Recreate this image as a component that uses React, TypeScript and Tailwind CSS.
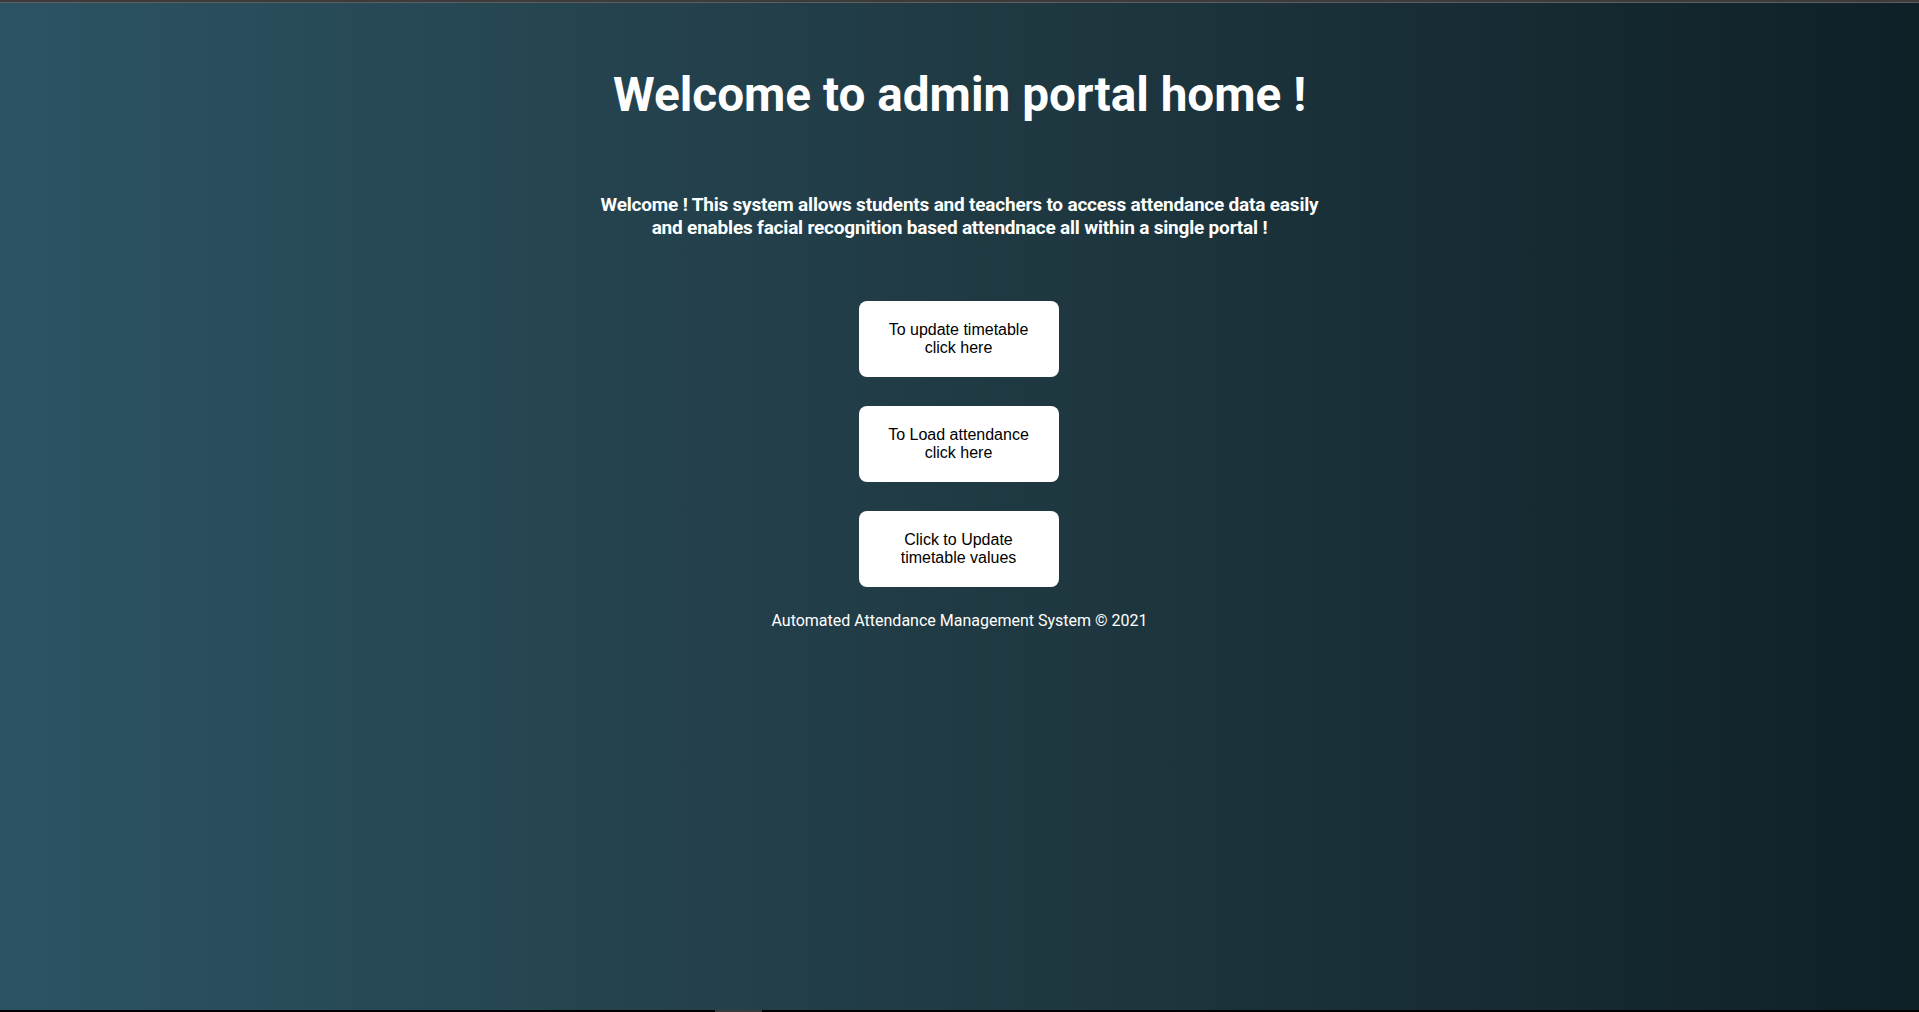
import React from 'react';

const links = [
  ['To update timetable', 'click here'],
  ['To Load attendance', 'click here'],
  ['Click to Update', 'timetable values'],
];

const App: React.FC = () => (
  <div className="w-full h-[1012px] flex flex-col overflow-hidden bg-black">
    <div className="h-[2px] bg-[#3c3c3c]" />
    <div className="h-[1px] bg-[#5e5e5e]" />
    <div
      className="flex-1 flex flex-col items-center bg-[linear-gradient(to_left,#0f2027,#203a43,#2c5364)] text-white"
      style={{ fontFamily: 'Roboto, "Noto Sans", sans-serif' }}
    >
      <h1 className="mt-[64px] text-[47.7px] leading-[1.2] font-bold">Welcome to admin portal home !</h1>
      <p className="mt-[69px] text-[19px] leading-[23px] font-bold text-center tracking-[-0.2px]">
        Welcome ! This system allows students and teachers to access attendance data easily
        <br />
        and enables facial recognition based attendnace all within a single portal !
      </p>
      <div className="mt-[62px] mr-[2px] flex flex-col gap-[29px]">
        {links.map(([a, b]) => (
          <button
            key={a}
            className="w-[200px] h-[76px] bg-white rounded-[8px] text-black text-[16px] leading-[18px] text-center"
            style={{ fontFamily: '"Liberation Sans", Arial, sans-serif' }}
          >
            {a}
            <br />
            {b}
          </button>
        ))}
      </div>
      <p className="mt-[24px] text-[16px] leading-[19px]">Automated Attendance Management System © 2021</p>
    </div>
    <div className="h-[2px] bg-black relative">
      <div className="absolute left-[715px] top-0 w-[47px] h-[2px] bg-[#3a3a3a]" />
    </div>
  </div>
);

export default App;
